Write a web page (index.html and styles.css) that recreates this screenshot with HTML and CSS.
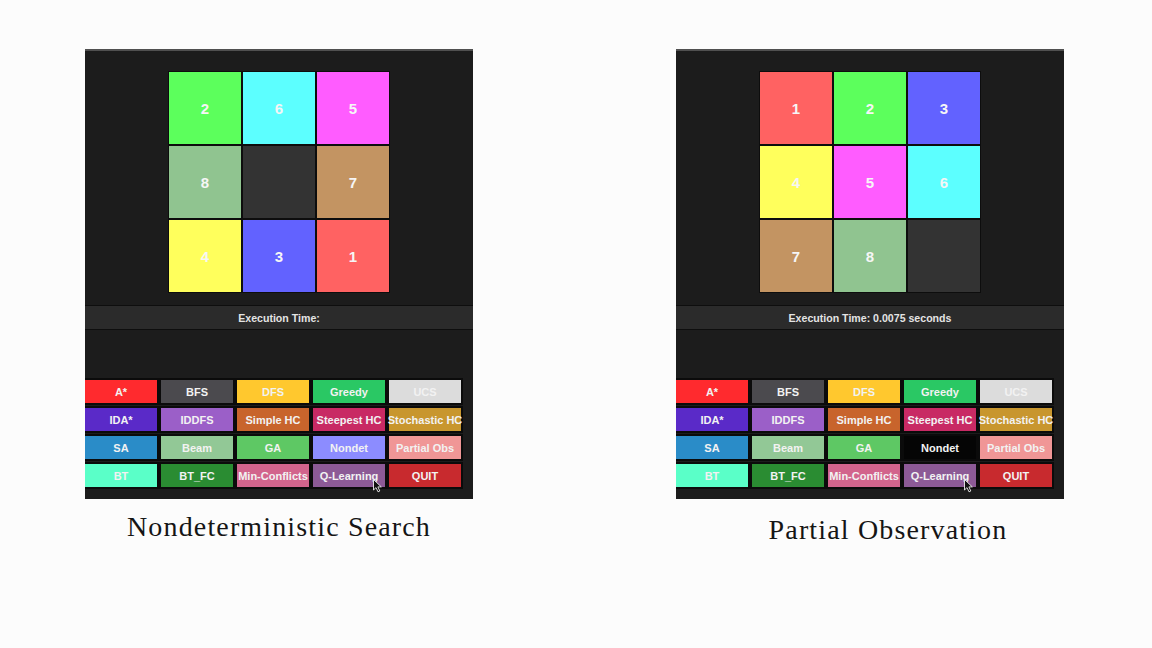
FILE: index.html
```html
<!DOCTYPE html>
<html>
<head>
<meta charset="utf-8">
<link rel="stylesheet" href="styles.css">
</head>
<body>
<main class="page">
  <section class="demo">
    <div class="panel">
      <div class="board-area">
        <div class="board">
          <div class="tile green">2</div>
          <div class="tile cyan">6</div>
          <div class="tile magenta">5</div>
          <div class="tile sage">8</div>
          <div class="tile blank"></div>
          <div class="tile tan">7</div>
          <div class="tile yellow">4</div>
          <div class="tile blue">3</div>
          <div class="tile red">1</div>
        </div>
      </div>
      <div class="exec-bar">Execution Time:</div>
      <div class="spacer"></div>
      <div class="buttons">
        <div class="btn b-astar">A*</div>
        <div class="btn b-bfs">BFS</div>
        <div class="btn b-dfs">DFS</div>
        <div class="btn b-greedy">Greedy</div>
        <div class="btn b-ucs">UCS</div>
        <div class="btn b-ida">IDA*</div>
        <div class="btn b-iddfs">IDDFS</div>
        <div class="btn b-simple">Simple HC</div>
        <div class="btn b-steep">Steepest HC</div>
        <div class="btn b-stoch">Stochastic HC</div>
        <div class="btn b-sa">SA</div>
        <div class="btn b-beam">Beam</div>
        <div class="btn b-ga">GA</div>
        <div class="btn b-nondet">Nondet</div>
        <div class="btn b-partial">Partial Obs</div>
        <div class="btn b-bt">BT</div>
        <div class="btn b-btfc">BT_FC</div>
        <div class="btn b-minc">Min-Conflicts</div>
        <div class="btn b-ql">Q-Learning
          <svg class="cursor" width="10" height="14" viewBox="0 0 10 14"><path d="M0.5 0.5 L0.5 11 L3 8.6 L5 12.8 L6.8 12 L4.9 7.9 L8.3 7.9 Z" fill="#111" stroke="#eee" stroke-width="0.9"/></svg>
        </div>
        <div class="btn b-quit">QUIT</div>
      </div>
    </div>
    <p class="caption">Nondeterministic Search</p>
  </section>

  <section class="demo">
    <div class="panel">
      <div class="board-area">
        <div class="board">
          <div class="tile red">1</div>
          <div class="tile green">2</div>
          <div class="tile blue">3</div>
          <div class="tile yellow">4</div>
          <div class="tile magenta">5</div>
          <div class="tile cyan">6</div>
          <div class="tile tan">7</div>
          <div class="tile sage">8</div>
          <div class="tile blank"></div>
        </div>
      </div>
      <div class="exec-bar">Execution Time: 0.0075 seconds</div>
      <div class="spacer"></div>
      <div class="buttons">
        <div class="btn b-astar">A*</div>
        <div class="btn b-bfs">BFS</div>
        <div class="btn b-dfs">DFS</div>
        <div class="btn b-greedy">Greedy</div>
        <div class="btn b-ucs">UCS</div>
        <div class="btn b-ida">IDA*</div>
        <div class="btn b-iddfs">IDDFS</div>
        <div class="btn b-simple">Simple HC</div>
        <div class="btn b-steep">Steepest HC</div>
        <div class="btn b-stoch">Stochastic HC</div>
        <div class="btn b-sa">SA</div>
        <div class="btn b-beam">Beam</div>
        <div class="btn b-ga">GA</div>
        <div class="btn b-nondet-active">Nondet</div>
        <div class="btn b-partial">Partial Obs</div>
        <div class="btn b-bt">BT</div>
        <div class="btn b-btfc">BT_FC</div>
        <div class="btn b-minc">Min-Conflicts</div>
        <div class="btn b-ql">Q-Learning
          <svg class="cursor" width="10" height="14" viewBox="0 0 10 14"><path d="M0.5 0.5 L0.5 11 L3 8.6 L5 12.8 L6.8 12 L4.9 7.9 L8.3 7.9 Z" fill="#111" stroke="#eee" stroke-width="0.9"/></svg>
        </div>
        <div class="btn b-quit">QUIT</div>
      </div>
    </div>
    <p class="caption caption-right">Partial Observation</p>
  </section>
</main>
</body>
</html>
```

FILE: styles.css
```css
html, body {
  margin: 0;
  padding: 0;
  background: #fcfcfc;
}

.page {
  display: flex;
  gap: 203px;
  padding: 49px 0 0 85px;
  font-family: "Liberation Sans", Arial, sans-serif;
}

.demo {
  width: 388px;
  display: flex;
  flex-direction: column;
}

.panel {
  width: 388px;
  height: 450px;
  box-sizing: border-box;
  background: #1c1c1c;
  border-top: 2px solid #505050;
  display: flex;
  flex-direction: column;
  overflow: hidden;
}

.board-area {
  display: flex;
  justify-content: center;
  padding: 20px 0 12px;
}

.board {
  display: grid;
  grid-template-columns: repeat(3, 72px);
  grid-template-rows: repeat(3, 72px);
  gap: 2px;
  padding: 1px;
  background: #0d0d0d;
}

.tile {
  display: flex;
  align-items: center;
  justify-content: center;
  color: #f6f6f6;
  font-size: 15px;
  font-weight: 700;
}

.green { background: #5cff5c; }
.cyan { background: #5cffff; }
.magenta { background: #ff5cff; }
.sage { background: #90c490; }
.blank { background: #333333; }
.tan { background: #c39462; }
.yellow { background: #ffff5c; }
.blue { background: #6262ff; }
.red { background: #ff6262; }

.exec-bar {
  height: 22px;
  border-top: 1px solid #0e0e0e;
  border-bottom: 1px solid #0e0e0e;
  background: #2b2b2b;
  color: #e4e4e4;
  font-size: 10.6px;
  font-weight: 700;
  display: flex;
  align-items: center;
  justify-content: center;
  padding-top: 1px;
  box-sizing: content-box;
}

.spacer {
  height: 48px;
}

.buttons {
  display: grid;
  grid-template-columns: repeat(5, 76px);
  grid-auto-rows: 27px;
  row-gap: 1px;
  margin-left: -2px;
}

.btn {
  position: relative;
  border: 2px solid #0b0b0b;
  display: flex;
  align-items: center;
  justify-content: center;
  color: #f2f2f2;
  font-size: 11px;
  font-weight: 700;
  white-space: nowrap;
}

.b-astar { background: #ff2a2e; }
.b-bfs { background: #4b4a4e; }
.b-dfs { background: #ffc82e; }
.b-greedy { background: #2ac864; }
.b-ucs { background: #dcdcdc; }
.b-ida { background: #5a2ac8; }
.b-iddfs { background: #9b5fc8; }
.b-simple { background: #c8642c; }
.b-steep { background: #c82a64; }
.b-stoch { background: #c8962e; }
.b-sa { background: #2a8cc8; }
.b-beam { background: #92c896; }
.b-ga { background: #5ec864; }
.b-nondet { background: #8c8cff; }
.b-nondet-active { background: #050505; }
.b-partial { background: #f09696; }
.b-bt { background: #5affc8; }
.b-btfc { background: #2a8c32; }
.b-minc { background: #d2648c; }
.b-ql { background: #8c5a96; }
.b-quit { background: #c82a2e; }

.cursor {
  position: absolute;
  left: 60px;
  top: 15px;
}

.caption {
  margin: 12px 0 0;
  font-family: "Liberation Serif", "Times New Roman", serif;
  font-size: 28px;
  line-height: 32px;
  letter-spacing: 1.15px;
  color: #151515;
  text-align: center;
}

.caption-right {
  margin-top: 15px;
  padding-left: 36px;
}
```
